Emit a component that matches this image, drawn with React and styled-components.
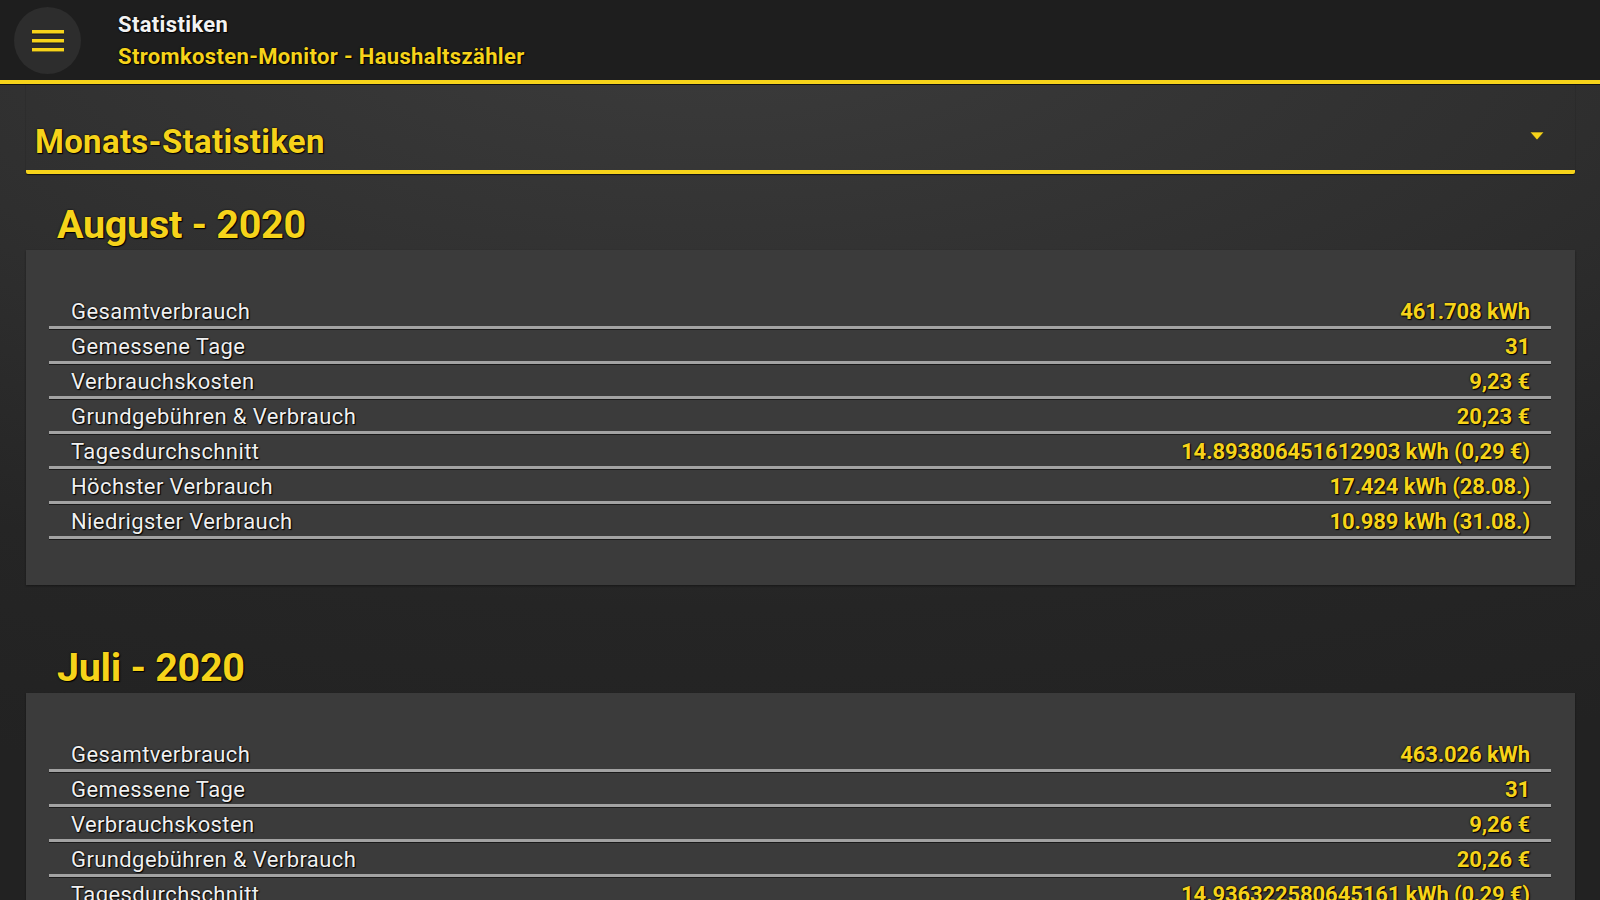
import React from 'react';
import styled, { createGlobalStyle } from 'styled-components';

const Global = createGlobalStyle`
    html, body {
        margin: 0;
        padding: 0;
        background: #232323;
    }
    body {
        font-family: Roboto, "Liberation Sans", sans-serif;
    }
    *, *::before, *::after {
        box-sizing: border-box;
    }
`;

const YELLOW = '#f6d31a';
const TEXT_SHADOW = '1px 1px 1px #000, 0 0 2px #000';

const Page = styled.div`
    width: 1600px;
    height: 900px;
    overflow: hidden;
    background: radial-gradient(ellipse 120% 90% at 45% 0%, #3c3c3c 0%, #2f2f2f 45%, #252525 75%, #222 100%);
`;

const TopBar = styled.header`
    height: 84px;
    display: flex;
    align-items: center;
    background: #1e1e1e;
    border-bottom: 4px solid ${YELLOW};
    box-shadow: 0 1px 0 #111;
`;

const MenuButton = styled.button`
    width: 67px;
    height: 67px;
    margin-left: 14px;
    border: none;
    border-radius: 50%;
    background: #2d2d2d;
    display: flex;
    align-items: center;
    justify-content: center;
    padding: 0;
    cursor: pointer;
`;

const TitleBlock = styled.div`
    margin-left: 37px;
    margin-top: 2px;
    display: flex;
    flex-direction: column;
    gap: 6px;
`;

const Title = styled.div`
    color: #f2f2f2;
    font-size: 22px;
    font-weight: 700;
    line-height: 26px;
    letter-spacing: 0.35px;
    text-shadow: ${TEXT_SHADOW};
`;

const Subtitle = styled(Title)`
    color: ${YELLOW};
`;

const Content = styled.main`
    padding: 0 25px 0 26px;
`;

const Dropdown = styled.div`
    height: 90px;
    display: flex;
    align-items: center;
    justify-content: space-between;
    padding: 28px 30px 0 9px;
    border-bottom: 4px solid ${YELLOW};
    box-shadow: 0 1px 1px #111;
    border-radius: 0 0 2px 2px;
`;

const DropdownLabel = styled.div`
    color: ${YELLOW};
    font-size: 33px;
    font-weight: 700;
    letter-spacing: 0.3px;
    text-shadow: ${TEXT_SHADOW};
`;

const CaretIcon = styled.svg`
    margin-top: -10px;
`;

const Section = styled.section`
    margin-top: ${p => p.$first ? 26 : 58}px;
`;

const MonthTitle = styled.h2`
    margin: 0;
    height: 50px;
    line-height: 50px;
    padding-left: 31px;
    color: ${YELLOW};
    font-size: 39.5px;
    font-weight: 700;
    letter-spacing: -0.3px;
    text-shadow: ${TEXT_SHADOW};
`;

const Card = styled.div`
    background: #3b3b3b;
    padding: 44px 24px 46px 23px;
    box-shadow: 0 1px 2px rgba(0, 0, 0, 0.4);
`;

const Row = styled.div`
    height: 35px;
    display: flex;
    align-items: center;
    justify-content: space-between;
    padding: 2px 21px 0 22px;
    border-bottom: 3px solid #a2a2a2;
    box-shadow: 0 1px 0 #1a1a1a;
`;

const Label = styled.span`
    color: #f0f0f0;
    font-size: 22px;
    letter-spacing: 0.4px;
    text-shadow: ${TEXT_SHADOW};
`;

const Value = styled.span`
    color: ${YELLOW};
    font-size: 22px;
    font-weight: 700;
    letter-spacing: -0.1px;
    text-shadow: ${TEXT_SHADOW};
`;

const months = [
    {
        title: 'August - 2020',
        rows: [
            ['Gesamtverbrauch', '461.708 kWh'],
            ['Gemessene Tage', '31'],
            ['Verbrauchskosten', '9,23 €'],
            ['Grundgebühren & Verbrauch', '20,23 €'],
            ['Tagesdurchschnitt', '14.893806451612903 kWh (0,29 €)'],
            ['Höchster Verbrauch', '17.424 kWh (28.08.)'],
            ['Niedrigster Verbrauch', '10.989 kWh (31.08.)'],
        ],
    },
    {
        title: 'Juli - 2020',
        rows: [
            ['Gesamtverbrauch', '463.026 kWh'],
            ['Gemessene Tage', '31'],
            ['Verbrauchskosten', '9,26 €'],
            ['Grundgebühren & Verbrauch', '20,26 €'],
            ['Tagesdurchschnitt', '14.936322580645161 kWh (0,29 €)'],
            ['Höchster Verbrauch', '18.112 kWh (14.07.)'],
            ['Niedrigster Verbrauch', '10.204 kWh (05.07.)'],
        ],
    },
];

const MenuIcon = () => (
    <svg width="34" height="24" viewBox="0 0 34 24">
        {[2, 11, 20].map(y => (
            <g key={y}>
                <rect x="1" y={y + 1} width="32" height="3.5" fill="#101020" />
                <rect x="1" y={y} width="32" height="3.5" fill={YELLOW} />
            </g>
        ))}
    </svg>
);

const Caret = () => (
    <CaretIcon width="16" height="10" viewBox="0 0 16 10">
        <path d="M1 1 L15 1 L8 9 Z" fill={YELLOW} stroke="#222" strokeWidth="0.6" />
    </CaretIcon>
);

const App = () => {
    return (<>
        <Global />
        <Page>
            <TopBar>
                <MenuButton aria-label="Menü"><MenuIcon /></MenuButton>
                <TitleBlock>
                    <Title>Statistiken</Title>
                    <Subtitle>Stromkosten-Monitor - Haushaltszähler</Subtitle>
                </TitleBlock>
            </TopBar>
            <Content>
                <Dropdown>
                    <DropdownLabel>Monats-Statistiken</DropdownLabel>
                    <Caret />
                </Dropdown>
                {months.map((m, i) => (
                    <Section key={m.title} $first={i === 0}>
                        <MonthTitle>{m.title}</MonthTitle>
                        <Card>
                            {m.rows.map(([label, value]) => (
                                <Row key={label}>
                                    <Label>{label}</Label>
                                    <Value>{value}</Value>
                                </Row>
                            ))}
                        </Card>
                    </Section>
                ))}
            </Content>
        </Page>
    </>);
};

export default App;
